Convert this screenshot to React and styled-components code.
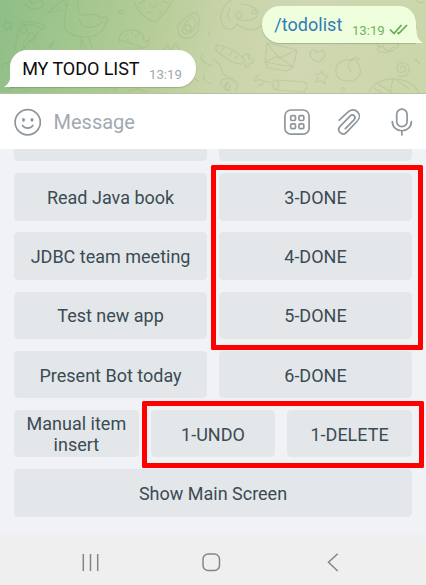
import React from "react";
import styled, { createGlobalStyle } from "styled-components";

const GlobalStyle = createGlobalStyle`
  * { box-sizing: border-box; }
  body { margin: 0; font-family: Roboto, "Liberation Sans", sans-serif; }
`;

const Screen = styled.div`
  position: relative;
  display: flex;
  flex-direction: column;
  width: 426px;
  height: 585px;
  overflow: hidden;
  background: #f0f2f6;
`;

const Chat = styled.section`
  position: relative;
  display: flex;
  flex-direction: column;
  gap: 7px;
  height: 94px;
  padding: 5.5px 10px 0;
  background: linear-gradient(103deg, #8fbe87 0%, #a3c78e 19%, #b8cd99 37%, #c9d4aa 52%, #d0d7b1 70%, #cbd6aa 100%);
  border-bottom: 1px solid #b5c49b;
`;

const Doodles = styled.svg`
  position: absolute;
  inset: 0;
  width: 426px;
  height: 93px;
  fill: none;
  stroke: #6e9459;
  stroke-opacity: 0.17;
  stroke-width: 1.1;
  stroke-linecap: round;
  stroke-linejoin: round;
`;

const Bubble = styled.div`
  position: relative;
  display: flex;
  align-self: ${(p) => (p.$out ? "flex-end" : "flex-start")};
  width: ${(p) => (p.$out ? 154 : 186)}px;
  height: 37px;
  padding-left: 12.2px;
  border-radius: ${(p) => (p.$out ? "18px 17px 0 18px" : "17px 18px 18px 0")};
  background: ${(p) => (p.$out ? "#effedd" : "#ffffff")};
  box-shadow: 0 1px 1px rgba(90, 120, 70, 0.35);
`;

const Tail = styled.svg`
  position: absolute;
  bottom: 0;
  width: 7px;
  height: 14px;
  ${(p) => (p.$out ? "right: -6.5px" : "left: -6.5px")};
  fill: ${(p) => (p.$out ? "#effedd" : "#ffffff")};
`;

const MessageText = styled.span`
  font-size: 18px;
  line-height: 37px;
  letter-spacing: ${(p) => p.$spacing || 0}px;
  color: ${(p) => p.$color};
  white-space: nowrap;
`;

const Time = styled.span`
  margin-left: ${(p) => p.$gap}px;
  padding-top: 8px;
  font-size: 13.2px;
  line-height: 34px;
  color: ${(p) => p.$color};
`;

const Checks = styled.svg`
  width: 19px;
  height: 11px;
  margin: 18.5px 0 0 4.5px;
  fill: none;
  stroke: #62ac55;
  stroke-width: 1.7;
`;

const InputBar = styled.section`
  display: flex;
  align-items: center;
  height: 55px;
  padding: 0 13px 0 13px;
  background: #ffffff;
`;

const Icon = styled.svg`
  flex: none;
  width: ${(p) => p.$w}px;
  height: 30px;
  margin-right: ${(p) => p.$after || 0}px;
  fill: none;
  stroke: #8e969c;
  stroke-width: 1.7;
  stroke-linecap: round;
  stroke-linejoin: round;
`;

const Placeholder = styled.span`
  flex: 1;
  color: #a2a9b0;
  font-size: 20px;
  line-height: 24px;
`;

const Keyboard = styled.section`
  display: flex;
  flex-direction: column;
  justify-content: flex-end;
  gap: 11.8px;
  height: 386px;
  padding: 0 14px 18.4px;
  overflow: hidden;
`;

const Row = styled.div`
  display: grid;
  flex: none;
  grid-template-columns: repeat(${(p) => p.$count}, 1fr);
  gap: 11.8px;
  height: 47.4px;
`;

const Key = styled.button`
  display: flex;
  align-items: center;
  justify-content: center;
  min-width: 0;
  padding: 1.2px 6px 0;
  border: 0;
  border-radius: 4.5px;
  background: #e3e7ea;
  color: #3b4b53;
  font: 400 18px/21px Roboto, "Liberation Sans", sans-serif;
  text-align: center;
`;

const NavBar = styled.nav`
  display: flex;
  flex: 1;
  align-items: flex-start;
  justify-content: space-between;
  padding: 16px 82px 0 80px;
  background: #efefef;
`;

const NavIcon = styled.svg`
  width: 22px;
  height: 22px;
  fill: none;
  stroke: #858585;
  stroke-width: 1.5;
`;

const Highlight = styled.div`
  position: absolute;
  left: ${(p) => p.$x}px;
  top: ${(p) => p.$y}px;
  width: ${(p) => p.$w}px;
  height: ${(p) => p.$h}px;
  border: 5px solid #ff0000;
  border-radius: 1.5px;
`;

const rows = [
  ["", ""],
  ["Read Java book", "3-DONE"],
  ["JDBC team meeting", "4-DONE"],
  ["Test new app", "5-DONE"],
  ["Present Bot today", "6-DONE"],
  ["Manual item insert", "1-UNDO", "1-DELETE"],
  ["Show Main Screen"],
];

function Wallpaper() {
  return (
    <Doodles viewBox="0 0 426 93" aria-hidden="true">
      <path d="M25 3c3 7 13 8 17 3 3-4-1-7-6-6M29 0c1 3 4 4 8 3" />
      <path d="m6 20 2 3 4-1-2 4 2 3-4-1-2 3-1-4-3-1 3-2z" />
      <path d="M20 23c9-2 18-1 25 3 1 3-2 4-3 2L18 54l-3-5 5-26M22 25c6-1 13 0 19 3" />
      <circle cx="31" cy="37" r="4" /><circle cx="24" cy="30" r="3" /><path d="M25 48a4 4 0 0 1 0-7" />
      <path d="M48 48c-1-2 3-2 5-6M50 48l4-6" />
      <path d="M47 13 57 5c3-5 8-4 10-3 0 10-5 18-2 26 3 7 14 9 21 9 10 0 17-5 20-14 3-7-1-8-5-4-2-4-9-6-14-4-8 2-11-6-8-15M47 13l14-3M79 18c1 10 12 13 23 4M81 37v12M88 37l5 12M82 40l4 9" />
      <circle cx="66" cy="5" r="1" /><circle cx="121" cy="12" r="2" />
      <path d="M120 43c-3-8 4-14 13-13 7 1 11 5 11 10M121 40l21 7M124 48h20c3-1 5-4 5-8M144 42c3 0 5-2 6-5" />
      <path d="M126 35h0M132 33h0M136 37h0M128 40h0M139 34h0" strokeWidth="2" />
      <path d="M135 2c2 9 10 17 20 20 7-5 13-12 17-21M139 4l6-4M150 3c-1 5 6 6 7 1M163 1l5 2M147 13c2-2 5-1 5 1M159 14l4-3" />
      <path d="M191 14c5-3 9 1 8 8-1 5 0 10-4 13-6 5-16 4-17-4-2-9 7-12 13-17zM189 19c4-4 8 1 6 7s-7 9-11 7c-4-3 0-8 5-14z" /><circle cx="188" cy="28" r="3" />
      <path d="m163 50 5-5 2 5M171 50l4-6 5 6M203 54c-3 2-2 6 2 9l7 3M3 69c-3-3 1-7 5-5M204 74c-1 5 1 8 7 10M9 89c4-3 10-5 12 0M104 88c5-5 12-1 12 5M129 91l9-2 8 3M187 83c2-5 7-6 11-2" />
      <path d="M198 69c-7 2-10 8-8 14M209 32v3" />
      <path d="M231 0c-8 5-13 16-9 24s12 6 15 0c8 7 18 8 25 1M230 8c-3 5-3 10 0 12M242 4c8 1 17 5 16 10-2 7-14 8-21 5" />
      <circle cx="239" cy="15" r="3" /><circle cx="254" cy="12" r="2" />
      <path d="M217 45c-3 3-1 5 2 8 7 6 14 11 23 11l3-4c-7-8-18-14-28-15zM224 48l-3 4M232 52l-3 4M237 56l-2 3M242 59c1-5 6-7 8-3-2 1-2 2-1 3 6-1 5 5 0 5 1 4-3 4-4 0" />
      <path d="m267 43 30 7-4 17-28-5zM267 43l12 15 18-8M265 62l13-6 15 11M266 63l2 5 19 3 6-4M270 40h12" />
      <path d="M318 62c-8-3-10-9-6-12 2-1 5 0 5 3 3-4 8-2 8 2 0 3-4 6-7 7z" />
      <path d="m322 71 2 4 4 1-3 3 0 5-4-3-5 1 2-4-2-4h4z" />
      <path d="M357 61c-9-3-20-1-21 8-1 8 5 12 12 12 9 0 14-6 12-13-1-5-5-7-3-7zM350 61c-3 4-2 7 1 10M351 61c1-4 7-4 9-1" />
      <path d="M402 69c-3-2 1-5 3-2 3 5-6 8-8 2-2-7 11-9 12-1 1 6-5 10-11 8M378 43c-2 4 2 5 5 3 2 6 8 6 9 1 5 3 9-1 5-5M381 46l-4 3c2 5 12 4 17 1" />
      <path d="M276 80l29 2c3 3 2 8-1 10l-28-2c-5-3-3-10 0-10zM276 80c4 2 3 8 0 10M271 83c-6-4-4 1-8-2-5-4-7 2-9-1-1-3 5-2 4-5M258 86l5-2M369 92c4-8 14-14 27-13 12 1 20 7 23 14M377 83l15 10M393 79l-3 14M395 79l14 10M374 88l8 5" />
      <path d="M213 59c6 4 9 9 10 15l10 5M221 86c-2-8 6-9 10-6 7 0 8 7 4 11M229 82c-5 1-4 8 0 9M415 59l5 5M417 0c-1 2 3 3 8 2" />
      <circle cx="343" cy="89" r="1.5" /><circle cx="227" cy="87" r="3" />
    </Doodles>
  );
}

export default function App() {
  return (
    <>
      <GlobalStyle />
      <Screen>
        <Chat>
          <Wallpaper />
          <Bubble $out>
            <MessageText $color="#2f7db4" $spacing={0.05}>/todolist</MessageText>
            <Time $gap={9.5} $color="#6eb45e">13:19</Time>
            <Checks viewBox="0 0 19 11">
              <path d="m1 5.500 4 4L12.500 1M8.500 8.400l1.200 1.100L18 1" />
            </Checks>
            <Tail $out viewBox="0 0 7 14"><path d="M0 0h.5c0 7 1.500 11 6.500 14H0z" /></Tail>
          </Bubble>
          <Bubble>
            <MessageText $color="#0c0c0c" $spacing={-0.05}>MY TODO LIST</MessageText>
            <Time $gap={9.5} $color="#a0a8af">13:19</Time>
            <Tail viewBox="0 0 7 14"><path d="M7 0h-.5C6.500 7 5 11 0 14h7z" /></Tail>
          </Bubble>
        </Chat>

        <InputBar>
          <Icon $w={30} $after={10.5} viewBox="0 0 30 30">
            <circle cx="14.700" cy="15.300" r="12.600" />
            <path d="M9.500 18.500c2.600 3.600 7.800 3.600 10.400 0" />
            <g fill="#8e969c" stroke="none">
              <ellipse cx="10.500" cy="12.800" rx="1.500" ry="1.900" />
              <ellipse cx="19" cy="12.800" rx="1.500" ry="1.900" />
            </g>
          </Icon>
          <Placeholder>Message</Placeholder>
          <Icon $w={30} $after={23} viewBox="0 0 30 30">
            <rect x="2.900" y="3" width="24.200" height="24.200" rx="6" />
            <rect x="8.700" y="8.700" width="4.800" height="4.800" rx="1.200" />
            <rect x="17" y="8.700" width="4.800" height="4.800" rx="1.200" />
            <rect x="8.700" y="16.900" width="4.800" height="4.800" rx="1.200" />
            <rect x="17" y="16.900" width="4.800" height="4.800" rx="1.200" />
          </Icon>
          <Icon $w={30} $after={26} viewBox="0 0 30 30">
            <path d="M4.300 13.200 12.600 5.300C15.800 2 20 2.200 22.500 4.800s2.500 6.600-.6 9.700L11.800 25.200c-2.100 2.200-4.800 2.100-6.600.5-1.900-1.900-1.800-4.500.1-6.600l10-10.200c1.300-1.300 3-1.300 4 0 1 1.100.9 2.600-.3 3.900l-8.700 8.900" />
          </Icon>
          <Icon $w={22} viewBox="0 0 22 30">
            <rect x="5.700" y="2.200" width="10.400" height="17.500" rx="5.200" />
            <path d="M1.300 14.500c0 12.300 19.100 12.300 19.100 0M10.900 24v4" />
          </Icon>
        </InputBar>

        <Keyboard>
          {rows.map((labels, i) => (
            <Row key={i} $count={labels.length}>
              {labels.map((label, j) => <Key key={j}>{label}</Key>)}
            </Row>
          ))}
        </Keyboard>

        <NavBar>
          <NavIcon viewBox="0 0 22 22"><path d="M3.300 3v17M10.500 3v17M17.700 3v17" /></NavIcon>
          <NavIcon viewBox="0 0 22 22"><rect x="2" y="3" width="16.500" height="16.500" rx="5.200" /></NavIcon>
          <NavIcon viewBox="0 0 22 22"><path d="M15.700 2.800 6.500 11.300l9.200 8.700" /></NavIcon>
        </NavBar>

        <Highlight $x={211} $y={165} $w={212} $h={185} />
        <Highlight $x={142} $y={401} $w={282} $h={67} />
      </Screen>
    </>
  );
}
